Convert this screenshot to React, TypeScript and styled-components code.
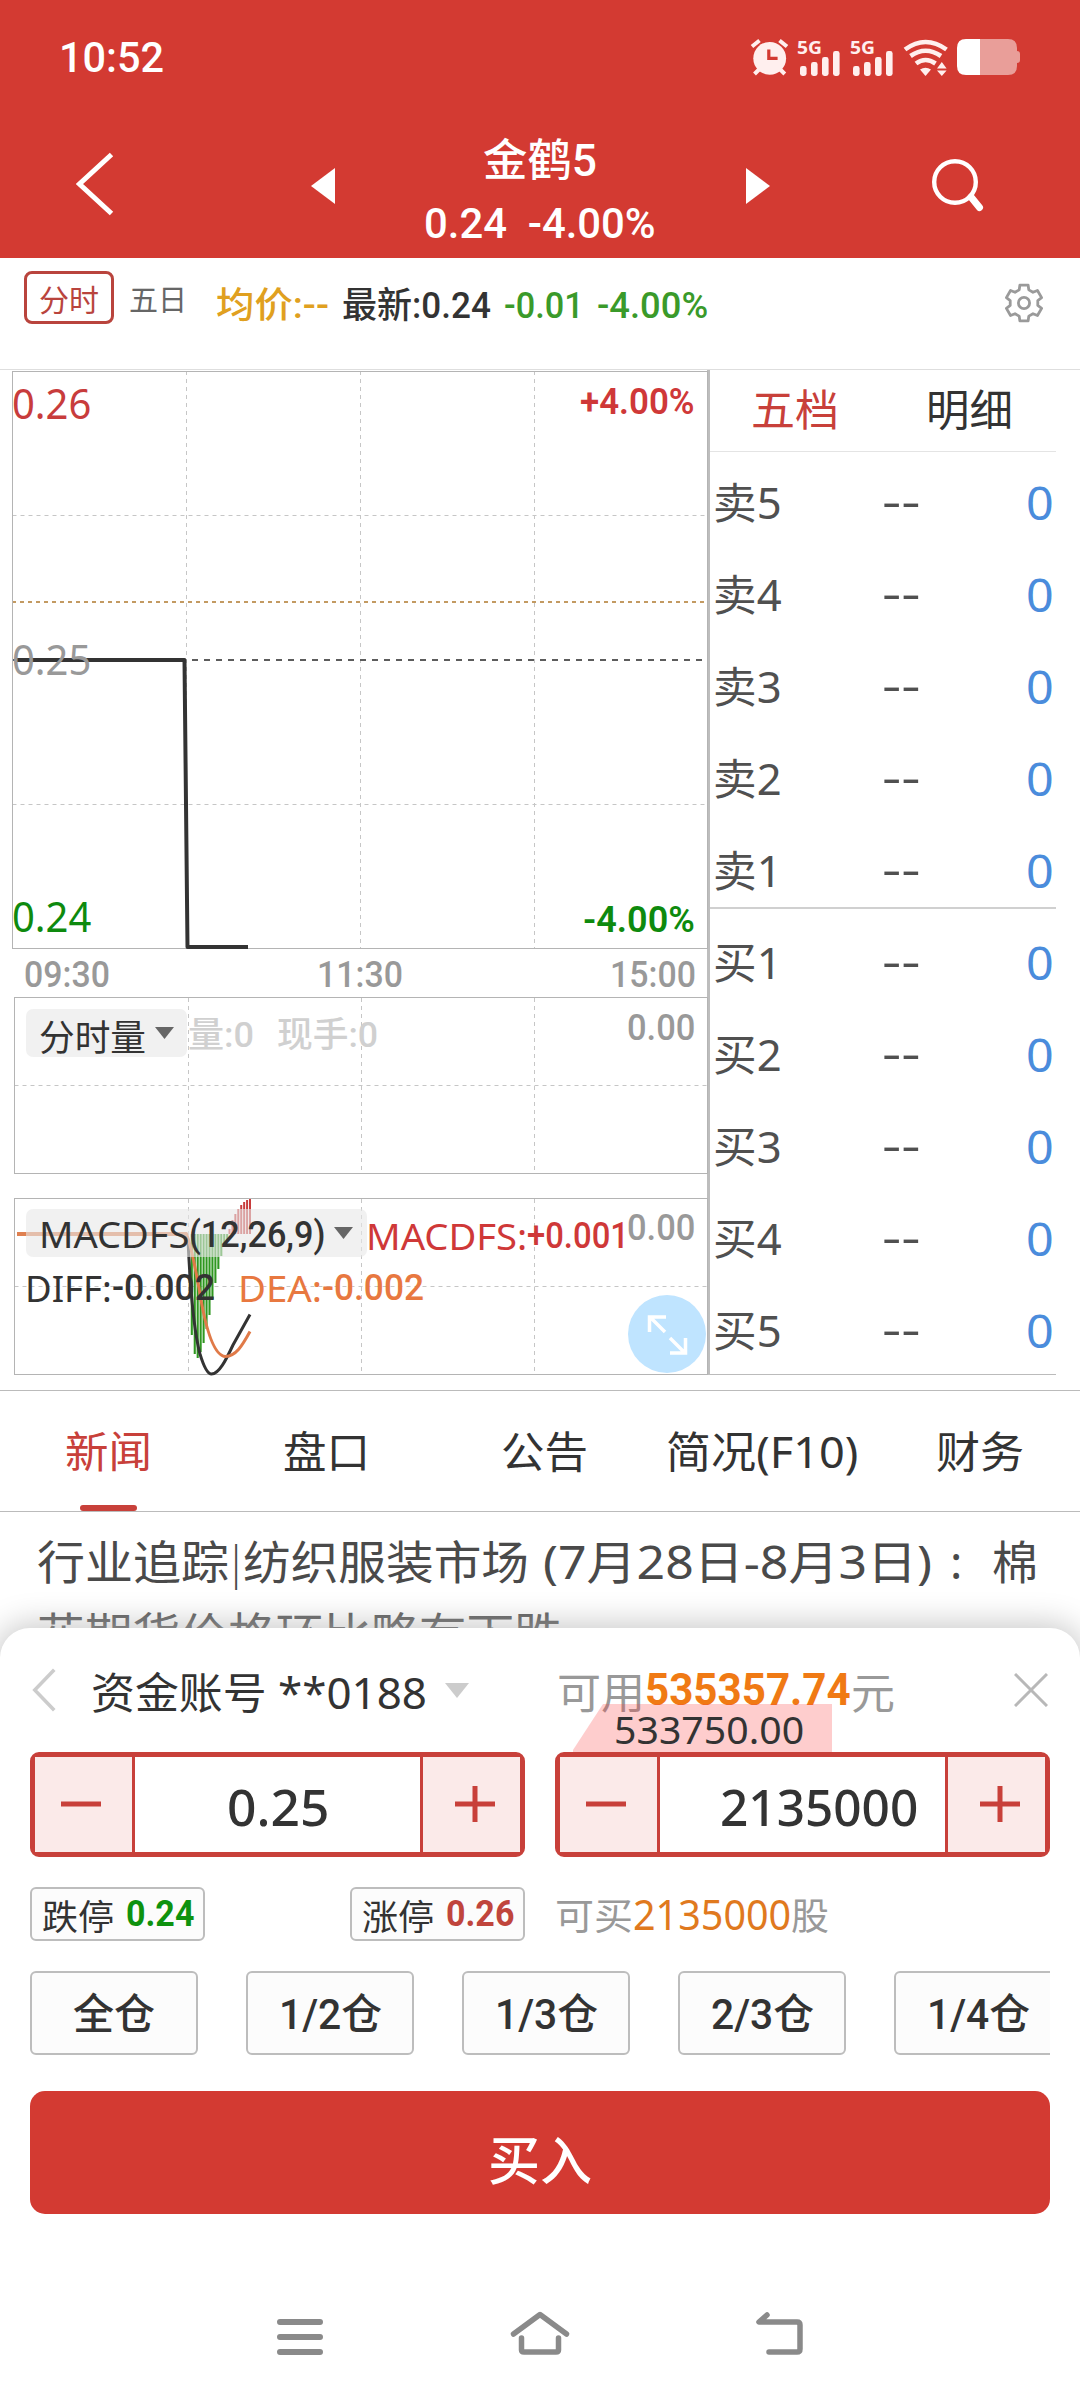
import React, { useLayoutEffect, useRef, useState } from "react";
import styled, { createGlobalStyle } from "styled-components";

const RED = "#d33a32";
const FRAME = "#bdbdbd";
const SANS = `"Noto Sans", "Noto Sans CJK SC", sans-serif`;
const DIN = `Roboto, "Noto Sans CJK SC", sans-serif`;
const CJK = `"Noto Sans CJK SC", "Noto Sans", sans-serif`;

const GlobalStyle = createGlobalStyle`
  *, *::before, *::after { box-sizing: border-box; }
  body { margin: 0; background: #fff; font-family: ${SANS}; color: #333; }
`;

/* ---------- text that is condensed to a given width ---------- */

const FitBox = styled.span<{ $w: number; $size: number }>`
  display: flex;
  flex: none;
  width: ${(p) => p.$w}px;
  height: ${(p) => p.$size}px;
  line-height: ${(p) => p.$size}px;
  font-size: ${(p) => p.$size}px;
`;

const FitInner = styled.span<{ $color: string; $weight: number; $font: string }>`
  flex: none;
  white-space: pre;
  transform-origin: 0 50%;
  color: ${(p) => p.$color};
  font-weight: ${(p) => p.$weight};
  font-family: ${(p) => p.$font};
`;

interface FitProps {
  w: number;
  size: number;
  color?: string;
  weight?: number;
  font?: string;
  children: string;
}

function Fit({ w, size, color = "#333", weight = 400, font = SANS, children }: FitProps) {
  const ref = useRef<HTMLSpanElement>(null);
  const [scale, setScale] = useState(1);
  useLayoutEffect(() => {
    if (ref.current) setScale(w / ref.current.offsetWidth);
  }, [w, size, children]);
  return (
    <FitBox $w={w} $size={size}>
      <FitInner
        ref={ref}
        $color={color}
        $weight={weight}
        $font={font}
        style={{ transform: `scaleX(${scale})` }}
      >
        {children}
      </FitInner>
    </FitBox>
  );
}

/* ---------- page ---------- */

const Page = styled.main`
  position: relative;
  display: flex;
  flex-direction: column;
  width: 1080px;
  height: 2400px;
  overflow: hidden;
  background: #fff;
`;

const Header = styled.header`
  flex: none;
  height: 258px;
  background: ${RED};
`;

const StatusBar = styled.div`
  display: flex;
  align-items: center;
  justify-content: space-between;
  height: 114px;
  padding: 0 59px 0 59px;
`;

const NavBar = styled.div`
  display: grid;
  grid-template-columns: 190px 265px 170px 265px 136px;
  justify-items: center;
  align-items: center;
  height: 144px;
`;

const BackSlot = styled.div`
  display: flex;
  padding-bottom: 4px;
`;

const Title = styled.div`
  display: flex;
  flex-direction: column;
  align-items: center;
  gap: 20px;
  padding-top: 11px;
`;

const ToolBar = styled.section`
  display: flex;
  align-items: flex-start;
  flex: none;
  height: 112px;
  padding-left: 24px;
  border-bottom: 1px solid #dedede;
`;

const PeriodChip = styled.button`
  display: flex;
  align-items: center;
  justify-content: center;
  width: 90px;
  height: 53px;
  margin-top: 13px;
  padding: 0;
  border: 3px solid #b9443d;
  border-radius: 8px;
  background: #fff;
`;

const PeriodPlain = styled.div`
  margin: 26px 0 0 15px;
`;

const Quote = styled.div`
  display: flex;
  align-items: center;
  height: 34px;
  margin: 31px 0 0 29px;
  gap: 13px;
`;

const GearSlot = styled.div`
  margin: 24px 35px 0 auto;
  height: 42px;
`;

/* ---------- market area ---------- */

const Market = styled.section`
  display: flex;
  flex: none;
  height: 1020px;
`;

const Charts = styled.div`
  display: flex;
  flex-direction: column;
  width: 710px;
  height: 1005px;
  border-right: 3px solid ${FRAME};
`;

const Panel = styled.div<{ $h: number; $top: number }>`
  position: relative;
  flex: none;
  width: 709px;
  height: ${(p) => p.$h}px;
  margin-top: ${(p) => p.$top}px;
  svg { display: block; }
`;

const Over = styled.div<{ $x: number; $y: number }>`
  position: absolute;
  left: ${(p) => p.$x}px;
  top: ${(p) => p.$y}px;
  display: flex;
`;

const TimeAxis = styled.div`
  display: flex;
  align-items: center;
  justify-content: space-between;
  height: 26px;
  margin-top: 11px;
  padding: 0 11px 0 24px;
`;

const Selector = styled.div<{ $w: number; $y: number }>`
  position: absolute;
  left: 26px;
  top: ${(p) => p.$y}px;
  display: flex;
  align-items: center;
  width: ${(p) => p.$w}px;
  height: 48px;
  padding-left: 13px;
  border-radius: 7px;
  background: rgba(232, 232, 232, 0.6);
`;

const SelectorText = styled.div`
  display: flex;
  padding-top: 4px;
  margin-right: 9px;
`;

const ExpandButton = styled.button`
  position: absolute;
  left: 628px;
  top: 97px;
  width: 78px;
  height: 78px;
  padding: 0;
  border: 0;
  border-radius: 50%;
  background: #bfe4ff;
`;

const Book = styled.div`
  display: flex;
  flex-direction: column;
  width: 346px;
  height: 1005px;
  border-bottom: 1px solid #bbb;
`;

const BookTabs = styled.div`
  display: flex;
  align-items: center;
  flex: none;
  height: 82px;
  padding: 0 0 6px 41px;
  gap: 87px;
  border-bottom: 1px solid #e4e4e4;
`;

const BookRows = styled.div`
  margin-top: -3px;
`;

const BookRow = styled.div<{ $last?: boolean }>`
  display: flex;
  align-items: center;
  height: 92px;
  padding: 15px 2px 0 3px;
  box-shadow: ${(p) => (p.$last ? `inset 0 -2px 0 #d0d0d0` : "none")};
`;

const Level = styled.div`
  width: 169px;
`;

const Dashes = styled.div`
  flex: 1;
  padding-bottom: 4px;
`;

/* ---------- tabs and news ---------- */

const Tabs = styled.nav`
  display: grid;
  grid-template-columns: repeat(5, 218px);
  flex: none;
  height: 122px;
  margin-left: -1px;
  border-top: 1px solid #bbb;
  border-bottom: 1px solid #bbb;
`;

const Tab = styled.div<{ $active?: boolean }>`
  display: flex;
  flex-direction: column;
  align-items: center;
  justify-content: flex-end;
  gap: 32px;
  &::after {
    content: "";
    width: 57px;
    height: 6px;
    border-radius: 3px;
    background: ${(p) => (p.$active ? "#c8403a" : "transparent")};
  }
`;

const News = styled.article`
  display: flex;
  flex-direction: column;
  gap: 26px;
  padding: 26px 0 0 37px;
`;

const NewsLine = styled.div`
  display: flex;
  align-items: center;
`;

const NewsDate = styled.div`
  margin-left: 14px;
`;

const NewsColon = styled.div`
  margin: 0 30px 0 18px;
`;

/* ---------- trading sheet ---------- */

const Sheet = styled.section`
  position: absolute;
  left: 0;
  right: 0;
  top: 1628px;
  height: 772px;
  display: flex;
  flex-direction: column;
  padding: 0 30px;
  border-radius: 30px 30px 0 0;
  background: #fff;
  box-shadow: 0 0 32px 4px rgba(0, 0, 0, 0.22);
`;

const Fade = styled.div`
  position: absolute;
  left: 0;
  right: 0;
  top: 1600px;
  height: 60px;
  background: linear-gradient(rgba(255, 255, 255, 0), rgba(255, 255, 255, 0.4) 28px);
`;

const AccountRow = styled.div`
  display: flex;
  align-items: center;
  flex: none;
  height: 44px;
  margin-top: 40px;
  padding: 0 2px;
`;

const Account = styled.div`
  display: flex;
  align-items: center;
  width: 495px;
  padding-left: 35px;
  gap: 18px;
`;

const AccountName = styled.div`
  padding-top: 4px;
`;

const Cash = styled.div`
  display: flex;
  align-items: center;
  margin-left: 6px;
`;

const CloseSlot = styled.div`
  display: flex;
  margin-left: auto;
`;

const AmountTag = styled.div`
  position: absolute;
  left: 573px;
  top: 76px;
  display: flex;
  align-items: center;
  width: 259px;
  height: 52px;
  padding: 0 0 2px 41px;
  background: rgba(250, 60, 60, 0.26);
  clip-path: polygon(30px 0, 100% 0, 100% 100%, 0 100%, 0 46px);
`;

const Columns = styled.div`
  display: flex;
  justify-content: space-between;
  flex: none;
  margin-top: 40px;
`;

const Column = styled.div`
  position: relative;
  width: 495px;
`;

const Stepper = styled.div`
  display: grid;
  grid-template-columns: 100px 1fr 100px;
  height: 105px;
  border: 5px solid #c8403a;
  border-radius: 9px;
  background: #fff;
`;

const StepButton = styled.button<{ $side: "left" | "right" }>`
  display: flex;
  align-items: center;
  justify-content: center;
  padding: ${(p) => (p.$side === "left" ? "0 6px 1px 0" : "0 0 1px 6px")};
  border: 0 solid #c8403a;
  border-${(p) => (p.$side === "left" ? "right" : "left")}-width: 3px;
  background: #fbeae9;
`;

const StepValue = styled.div<{ $shift?: number }>`
  display: flex;
  align-items: center;
  justify-content: center;
  padding-left: ${(p) => p.$shift || 0}px;
  padding-top: 3px;
`;

const Limits = styled.div`
  display: flex;
  justify-content: space-between;
  align-items: center;
  height: 54px;
  margin-top: 30px;
`;

const LimitChip = styled.button`
  display: flex;
  align-items: center;
  gap: 12px;
  width: 175px;
  height: 54px;
  padding: 0 0 0 10px;
  border: 2px solid ${FRAME};
  border-radius: 6px;
  background: #fcfcfc;
`;

const CanBuy = styled.div`
  display: flex;
  align-items: center;
`;

const Portions = styled.div`
  display: flex;
  gap: 48px;
  flex: none;
  height: 84px;
  margin-top: 30px;
  overflow: hidden;
`;

const Portion = styled.button`
  display: flex;
  align-items: center;
  justify-content: center;
  flex: none;
  width: 168px;
  padding: 3px 0 0;
  border: 2px solid ${FRAME};
  border-radius: 6px;
  background: #fcfcfc;
`;

const BuyButton = styled.button`
  display: flex;
  align-items: center;
  justify-content: center;
  flex: none;
  height: 123px;
  margin-top: 36px;
  padding: 11px 0 0;
  border: 0;
  border-radius: 15px;
  background: ${RED};
`;

const SystemNav = styled.nav`
  display: grid;
  grid-template-columns: repeat(3, 240px);
  justify-content: center;
  justify-items: center;
  flex: none;
  height: 50px;
  margin-top: 94px;
`;

/* ---------- icons ---------- */

function StatusIcons() {
  const bars = [
    [100, 66],
    [111, 62],
    [122, 57],
    [133, 51],
  ];
  return (
    <svg width="271" height="44" viewBox="750 35 271 44" fill="#ffefee">
      <circle cx="769.7" cy="58.3" r="16.4" />
      <g stroke="#ffefee" strokeWidth="4">
        <path d="M752 46.5L759.5 40.5M787 46.5L779.5 40.5" />
        <path d="M754.5 74L759 69.5M784.8 74L780.3 69.5" />
      </g>
      <path d="M768.8 49.5V58.3H777.6" fill="none" stroke={RED} strokeWidth="3.2" />
      {[0, 53].map((dx) => (
        <g key={dx} transform={`translate(${dx} 0)`}>
          <text x="797" y="54" fontFamily="Noto Sans, sans-serif" fontWeight="700" fontSize="18.5" textLength="25" lengthAdjust="spacingAndGlyphs">
            5G
          </text>
          {bars.map(([x, y]) => (
            <rect key={x} x={x + 700} y={y} width="6.6" height={76 - y} rx="2.4" />
          ))}
        </g>
      ))}
      <g fill="none" stroke="#ffefee" strokeWidth="4.6">
        <path d="M905 49.5Q925.5 34.5 946.5 49.5" />
        <path d="M910.5 56Q925.5 45.5 941 56" />
        <path d="M916 63.5Q925.5 56.5 935.5 63.5" />
      </g>
      <path d="M920 69.5Q925.5 66 931 69.5L925.5 76Z" />
      <path d="M937 68.5L941.8 62L946.6 68.5ZM937 70.5L941.8 76L946.6 70.5Z" />
      <path d="M980 39H1008Q1017 39 1017 48V51Q1020 51 1020 54V60Q1020 63 1017 63V66Q1017 75 1008 75H980Z" fill="#e99e99" />
      <path d="M980 39H966Q957 39 957 48V66Q957 75 966 75H980Z" fill="#fff" />
    </svg>
  );
}

function Chevron({ w, h, color, stroke }: { w: number; h: number; color: string; stroke: number }) {
  const s = stroke / 2;
  return (
    <svg width={w} height={h} fill="none" stroke={color} strokeWidth={stroke}>
      <path d={`M${w - s} ${s}L${s + 1} ${h / 2}L${w - s} ${h - s}`} />
    </svg>
  );
}

function SideArrow({ dir }: { dir: "left" | "right" }) {
  return (
    <svg width="24" height="36" fill="#fff">
      <path d={dir === "left" ? "M24 0V36L0 18Z" : "M0 0V36L24 18Z"} />
    </svg>
  );
}

function SearchIcon() {
  return (
    <svg width="54" height="56" fill="none" stroke="#fff">
      <circle cx="24" cy="24" r="20.8" strokeWidth="4.4" />
      <path d="M40 39L48.500 49.500" strokeWidth="7" strokeLinecap="round" />
    </svg>
  );
}

function GearIcon() {
  const points: string[] = [];
  for (let k = 0; k < 6; k++) {
    const a = -90 + 60 * k;
    [
      [14, -20],
      [18.4, -13],
      [18.4, 13],
      [14, 20],
    ].forEach(([r, d]) => {
      const t = ((a + d) * Math.PI) / 180;
      points.push(`${(21 + r * Math.cos(t)).toFixed(2)},${(21 + r * Math.sin(t)).toFixed(2)}`);
    });
  }
  return (
    <svg width="42" height="42" fill="none" stroke="#9a9a9a" strokeWidth="2.8" strokeLinejoin="round">
      <polygon points={points.join(" ")} />
      <circle cx="21" cy="21" r="5.6" />
    </svg>
  );
}

function Caret({ w, h, color }: { w: number; h: number; color: string }) {
  return (
    <svg width={w} height={h} fill={color}>
      <path d={`M0 0H${w}L${w / 2} ${h}Z`} />
    </svg>
  );
}

function StepSign({ plus }: { plus?: boolean }) {
  return (
    <svg width="42" height="42" stroke="#c8403a" strokeWidth="5">
      <path d={plus ? "M1 21H41M21 3V39" : "M1 21H41"} />
    </svg>
  );
}

/* ---------- charts ---------- */

const DASH = { stroke: "#c6c6c6", strokeWidth: 1, strokeDasharray: "4 4" };

function PriceChart() {
  return (
    <svg width="709" height="580" fill="none">
      <path d="M12.5 145.5H708M12.5 434.5H708M186.5 1V578M360.5 1V578M534.5 1V578" {...DASH} />
      <path d="M12 232H708" stroke="#c39a62" strokeWidth="2" strokeDasharray="4 4" />
      <path d="M12 290H708" stroke="#5c5c5c" strokeWidth="2" strokeDasharray="6 6" />
      <rect x="12.5" y="1.5" width="695" height="577" stroke="#b4b4b4" strokeWidth="1" />
      <path d="M15 290H184.5L187.5 577H248" stroke="#333" strokeWidth="4" strokeLinejoin="round" />
    </svg>
  );
}

function PanelGrid() {
  return (
    <>
      <path d="M14.5 88.5H708M188.5 1V176M361.5 1V176M534.5 1V176" {...DASH} />
      <rect x="14.5" y="0.5" width="693" height="176" stroke="#b4b4b4" strokeWidth="1" />
    </>
  );
}

const GREEN_BARS = [137, 156, 160, 154, 145, 131, 117, 101, 85, 71, 58, 47, 42];
const RED_BARS = [31, 22, 16, 11, 7, 4, 2, 1];

function MacdChart() {
  return (
    <svg width="709" height="178" fill="none">
      <PanelGrid />
      {GREEN_BARS.map((y, i) => (
        <path key={i} d={`M${191.8 + i * 2.95} 36V${y}`} stroke="#2f9720" strokeWidth="2.100" />
      ))}
      {RED_BARS.map((y, i) => (
        <path key={i} d={`M${229.5 + i * 2.93} 36V${y}`} stroke="#c83c3c" strokeWidth="2" />
      ))}
      <path d="M17 36H186L188 42C190 86 193 130 200 156Q206 176 211.5 176C219 176 226 162 233 147L250 116.5" stroke="#333" strokeWidth="3" />
      <path d="M17 36H186.5C192 50 195 70 199 90C204 122 212 158 225.5 158.500C236 158 242 148 250 133.500" stroke="#e07a48" strokeWidth="3" />
      <path d="M17 36H187" stroke="#df8050" strokeWidth="4" />
    </svg>
  );
}

const LEVELS = ["卖5", "卖4", "卖3", "卖2", "卖1", "买1", "买2", "买3", "买4", "买5"];
const PORTIONS: [string, number][] = [
  ["全仓", 82],
  ["1/2仓", 103],
  ["1/3仓", 103],
  ["2/3仓", 103],
  ["1/4仓", 103],
];
const TABS: [string, number][] = [
  ["新闻", 87],
  ["盘口", 87],
  ["公告", 87],
  ["简况(F10)", 192],
  ["财务", 88],
];

export default function App() {
  return (
    <Page>
      <GlobalStyle />
      <Header>
        <StatusBar>
          <Fit w={105} size={43} weight={500} font={DIN} color="#fff">10:52</Fit>
          <StatusIcons />
        </StatusBar>
        <NavBar>
          <BackSlot>
            <Chevron w={38} h={64} color="#fff" stroke={5} />
          </BackSlot>
          <SideArrow dir="left" />
          <Title>
            <Fit w={114} size={44} weight={500} font={DIN} color="#fff">金鹤5</Fit>
            <Fit w={232} size={42} weight={500} font={DIN} color="#fff">{"0.24  -4.00%"}</Fit>
          </Title>
          <SideArrow dir="right" />
          <SearchIcon />
        </NavBar>
      </Header>

      <ToolBar>
        <PeriodChip>
          <Fit w={60} size={30} font={CJK} color="#b9443d">分时</Fit>
        </PeriodChip>
        <PeriodPlain>
          <Fit w={58} size={29} font={CJK} color="#666">五日</Fit>
        </PeriodPlain>
        <Quote>
          <Fit w={113} size={36} weight={500} font={DIN} color="#e0a020">均价:--</Fit>
          <Fit w={149} size={36} weight={500} font={DIN}>最新:0.24</Fit>
          <Fit w={80} size={36} weight={500} font={DIN} color="#3a9a2a">-0.01</Fit>
          <Fit w={111} size={36} weight={500} font={DIN} color="#3a9a2a">-4.00%</Fit>
        </Quote>
        <GearSlot>
          <GearIcon />
        </GearSlot>
      </ToolBar>

      <Market>
        <Charts>
          <Panel $h={580} $top={0}>
            <PriceChart />
            <Over $x={12} $y={12}><Fit w={79} size={42} color="#c83c3c">0.26</Fit></Over>
            <Over $x={12} $y={268}><Fit w={79} size={42} color="#999">0.25</Fit></Over>
            <Over $x={12} $y={525}><Fit w={79} size={42} color="#0e8a0e">0.24</Fit></Over>
            <Over $x={580} $y={13}><Fit w={115} size={37} weight={600} font={DIN} color="#cf3838">+4.00%</Fit></Over>
            <Over $x={583} $y={531}><Fit w={112} size={37} weight={600} font={DIN} color="#0e8a0e">-4.00%</Fit></Over>
          </Panel>
          <TimeAxis>
            <Fit w={86} size={37} weight={500} font={DIN} color="#999">09:30</Fit>
            <Fit w={86} size={37} weight={500} font={DIN} color="#999">11:30</Fit>
            <Fit w={86} size={37} weight={500} font={DIN} color="#999">15:00</Fit>
          </TimeAxis>
          <Panel $h={178} $top={10}>
            <svg width="709" height="178" fill="none">
              <PanelGrid />
            </svg>
            <Selector $w={161} $y={12}>
              <SelectorText>
                <Fit w={107} size={36} weight={400} font={CJK}>分时量</Fit>
              </SelectorText>
              <Caret w={19} h={12} color="#666" />
            </Selector>
            <Over $x={188} $y={21}><Fit w={66} size={35} font={DIN} weight={500} color="#d0d0d0">量:0</Fit></Over>
            <Over $x={277} $y={21}><Fit w={101} size={35} font={DIN} weight={500} color="#d0d0d0">现手:0</Fit></Over>
            <Over $x={627} $y={13}><Fit w={68} size={36} font={DIN} weight={500} color="#999">0.00</Fit></Over>
          </Panel>
          <Panel $h={178} $top={23}>
            <MacdChart />
            <Selector $w={341} $y={11}>
              <SelectorText>
                <Fit w={150} size={36} weight={400} font={SANS}>MACDFS</Fit>
                <Fit w={136} size={36} weight={500} font={DIN}>(12,26,9)</Fit>
              </SelectorText>
              <Caret w={19} h={12} color="#666" />
            </Selector>
            <Over $x={366} $y={19}>
              <Fit w={161} size={37} color="#cf3838">MACDFS:</Fit>
              <Fit w={102} size={37} font={DIN} weight={500} color="#cf3838">+0.001</Fit>
            </Over>
            <Over $x={627} $y={12}><Fit w={68} size={36} font={DIN} weight={500} color="#999">0.00</Fit></Over>
            <Over $x={25} $y={71}>
              <Fit w={87} size={37}>DIFF:</Fit>
              <Fit w={103} size={37} font={DIN} weight={500}>-0.002</Fit>
            </Over>
            <Over $x={238} $y={71}>
              <Fit w={84} size={37} color="#e87840">DEA:</Fit>
              <Fit w={102} size={37} font={DIN} weight={500} color="#e87840">-0.002</Fit>
            </Over>
            <ExpandButton>
              <svg width="78" height="78" fill="none" stroke="#fff" strokeWidth="3.5">
                <path d="M37 37L22 22M21.5 37V22H38M42 43L57 58M42 58H57.5V43" />
              </svg>
            </ExpandButton>
          </Panel>
        </Charts>

        <Book>
          <BookTabs>
            <Fit w={88} size={43} weight={400} font={CJK} color="#c8403a">五档</Fit>
            <Fit w={87} size={43} weight={400} font={CJK}>明细</Fit>
          </BookTabs>
          <BookRows>
            {LEVELS.map((name, i) => (
              <BookRow key={name} $last={i === 4}>
                <Level>
                  <Fit w={69} size={43} color="#505050">{name}</Fit>
                </Level>
                <Dashes>
                  <Fit w={39} size={43} color="#505050">--</Fit>
                </Dashes>
                <Fit w={28} size={45} color="#4a8cdc">0</Fit>
              </BookRow>
            ))}
          </BookRows>
        </Book>
      </Market>

      <Tabs>
        {TABS.map(([name, w], i) => (
          <Tab key={name} $active={i === 0}>
            <Fit w={w} size={43} color={i === 0 ? "#c8403a" : "#333"}>{name}</Fit>
          </Tab>
        ))}
      </Tabs>

      <News>
        <NewsLine>
          <Fit w={192} size={46} color="#4a4a4a">行业追踪</Fit>
          <Fit w={14} size={46} color="#4a4a4a">|</Fit>
          <Fit w={286} size={46} color="#4a4a4a">纺织服装市场</Fit>
          <NewsDate>
            <Fit w={389} size={46} color="#4a4a4a">(7月28日-8月3日)</Fit>
          </NewsDate>
          <NewsColon>
            <Fit w={12} size={46} color="#4a4a4a">:</Fit>
          </NewsColon>
          <Fit w={46} size={46} color="#4a4a4a">棉</Fit>
        </NewsLine>
        <NewsLine>
          <Fit w={525} size={46} color="#4a4a4a">花期货价格环比略有下跌</Fit>
        </NewsLine>
      </News>

      <Fade />
      <Sheet>
        <AccountRow>
          <Chevron w={24} h={44} color="#ccc" stroke={3.5} />
          <Account>
            <AccountName>
              <Fit w={336} size={43}>资金账号 **0188</Fit>
            </AccountName>
            <Caret w={24} h={15} color="#ccc" />
          </Account>
          <Cash>
            <Fit w={88} size={43} font={CJK} color="#999">可用</Fit>
            <Fit w={206} size={44} weight={700} font={DIN} color="#f07a14">535357.74</Fit>
            <Fit w={44} size={43} font={CJK} color="#999">元</Fit>
          </Cash>
          <CloseSlot>
            <svg width="34" height="34" stroke="#b8b8b8" strokeWidth="3">
              <path d="M1 1L33 33M33 1L1 33" />
            </svg>
          </CloseSlot>
        </AccountRow>
        <AmountTag>
          <Fit w={190} size={38}>533750.00</Fit>
        </AmountTag>

        <Columns>
          <Column>
            <Stepper>
              <StepButton $side="left"><StepSign /></StepButton>
              <StepValue>
                <Fit w={102} size={51} weight={500}>0.25</Fit>
              </StepValue>
              <StepButton $side="right"><StepSign plus /></StepButton>
            </Stepper>
            <Limits>
              <LimitChip>
                <Fit w={72} size={35} font={CJK}>跌停</Fit>
                <Fit w={68} size={36} weight={700} font={DIN} color="#0e920e">0.24</Fit>
              </LimitChip>
              <LimitChip>
                <Fit w={72} size={35} font={CJK}>涨停</Fit>
                <Fit w={68} size={36} weight={700} font={DIN} color="#c0453c">0.26</Fit>
              </LimitChip>
            </Limits>
          </Column>
          <Column>
            <Stepper>
              <StepButton $side="left"><StepSign /></StepButton>
              <StepValue $shift={32}>
                <Fit w={198} size={51} weight={500}>2135000</Fit>
              </StepValue>
              <StepButton $side="right"><StepSign plus /></StepButton>
            </Stepper>
            <Limits>
              <CanBuy>
                <Fit w={78} size={37} font={CJK} color="#999">可买</Fit>
                <Fit w={158} size={42} color="#e0791e">2135000</Fit>
                <Fit w={38} size={37} font={CJK} color="#999">股</Fit>
              </CanBuy>
            </Limits>
          </Column>
        </Columns>

        <Portions>
          {PORTIONS.map(([name, w]) => (
            <Portion key={name}>
              <Fit w={w} size={42} weight={500} font={DIN}>{name}</Fit>
            </Portion>
          ))}
        </Portions>

        <BuyButton>
          <Fit w={104} size={52} weight={500} font={CJK} color="#fff">买入</Fit>
        </BuyButton>

        <SystemNav>
          <svg width="50" height="50" stroke="#8a8a8a" strokeWidth="6" strokeLinecap="round">
            <path d="M5 14H45M5 29H45M5 44H45" />
          </svg>
          <svg width="60" height="50" fill="none" stroke="#8a8a8a" strokeWidth="5.5" strokeLinecap="round" strokeLinejoin="round">
            <path d="M3.5 26L30 6.5L56.5 26M11.5 30V42Q11.5 44 14 44H46Q48.5 44 48.5 42V30" />
          </svg>
          <svg width="50" height="50" fill="none" stroke="#8a8a8a" strokeWidth="5.5" strokeLinecap="round" strokeLinejoin="round">
            <path d="M12 7L4 14H42Q45 14 45 17V41Q45 44 42 44H14" />
          </svg>
        </SystemNav>
      </Sheet>
    </Page>
  );
}
